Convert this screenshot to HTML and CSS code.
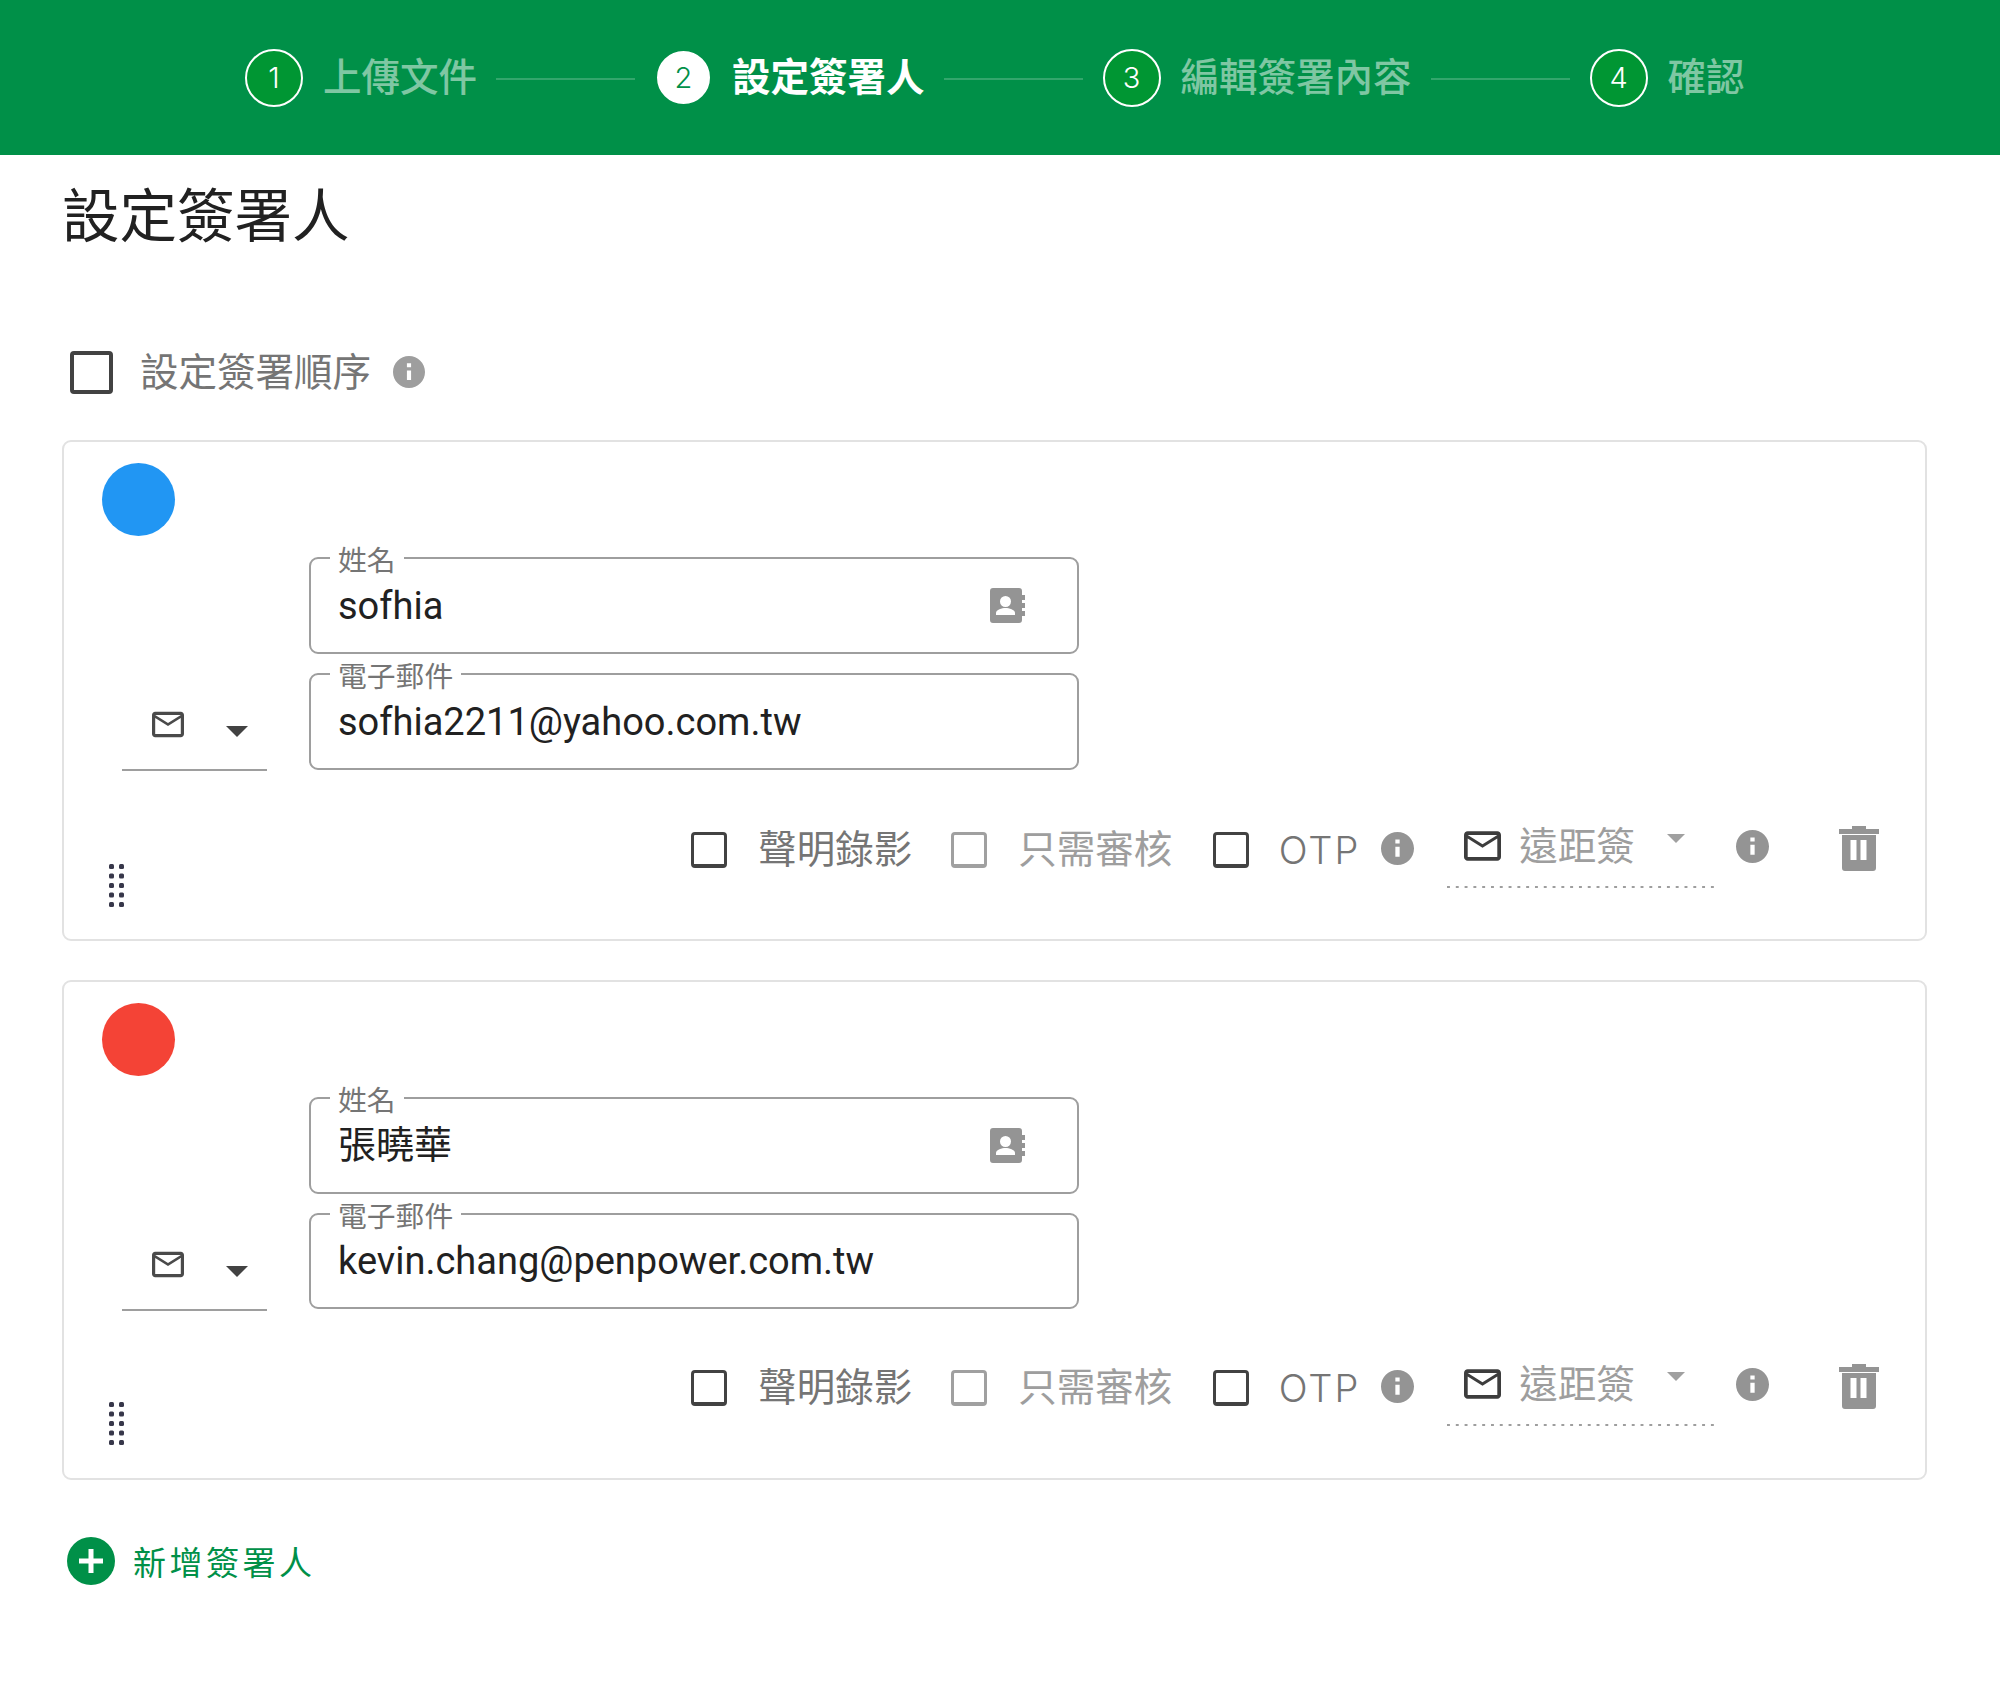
FILE: index.html
```html
<!DOCTYPE html>
<html lang="zh-Hant">
<head>
<meta charset="utf-8">
<title>設定簽署人</title>
<link rel="stylesheet" href="styles.css">
</head>
<body>
<header class="stepper">
  <span class="step-num">1</span><span class="step-text">上傳文件</span><span class="step-line"></span>
  <span class="step-num step-num-active">2</span><span class="step-text step-text-active">設定簽署人</span><span class="step-line"></span>
  <span class="step-num">3</span><span class="step-text">編輯簽署內容</span><span class="step-line"></span>
  <span class="step-num">4</span><span class="step-text">確認</span>
</header>
<main class="page">
  <h1 class="title">設定簽署人</h1>
  <div class="order-row">
    <span class="check check-large"></span>
    <span class="order-label">設定簽署順序</span>
    <svg class="icon-info icon-info-order" viewBox="2 2 20 20"><path d="M12 2C6.48 2 2 6.48 2 12s4.48 10 10 10 10-4.48 10-10S17.52 2 12 2zm1.3 15h-2.6v-6h2.6v6zm0-8h-2.6V6.6h2.6V9z"/></svg>
  </div>

  <section class="card">
    <div class="dot dot-blue"></div>
    <div class="identity">
      <div class="channel">
        <svg class="icon-mail" viewBox="2 4 20 16"><path d="M20 4H4c-1.100 0-1.990.9-1.990 2L2 18c0 1.100.9 2 2 2h16c1.100 0 2-.9 2-2V6c0-1.100-.9-2-2-2zm0 14H4V8l8 5 8-5v10zm-8-7L4 6h16l-8 5z"/></svg>
        <svg class="icon-caret" viewBox="0 0 24 12"><path d="M0 0h24L12 12z"/></svg>
      </div>
      <div class="fields">
        <div class="field">
          <span class="field-label">姓名</span>
          <span class="field-value">sofhia</span>
          <svg class="icon-book" viewBox="0 0 35 35"><path d="M3 0h26a3 3 0 0 1 3 3v4h3v5h-3v3h3v5h-3v3h3v5h-3v4a3 3 0 0 1-3 3H3a3 3 0 0 1-3-3V3a3 3 0 0 1 3-3z"/><circle class="book-cut" cx="15.500" cy="13.500" r="5.500"/><path class="book-cut" d="M6 27v-2c0-3.500 6-5 9.500-5s9.500 1.500 9.500 5v2z"/></svg>
        </div>
        <div class="field">
          <span class="field-label">電子郵件</span>
          <span class="field-value">sofhia2211@yahoo.com.tw</span>
        </div>
      </div>
    </div>
    <div class="options">
      <svg class="grip" viewBox="0 0 17 44"><g><rect x="1" y="1" width="5" height="5" rx="1.500"/><rect x="11" y="1" width="5" height="5" rx="1.500"/><rect x="1" y="10.500" width="5" height="5" rx="1.500"/><rect x="11" y="10.500" width="5" height="5" rx="1.500"/><rect x="1" y="20" width="5" height="5" rx="1.500"/><rect x="11" y="20" width="5" height="5" rx="1.500"/><rect x="1" y="29.500" width="5" height="5" rx="1.500"/><rect x="11" y="29.500" width="5" height="5" rx="1.500"/><rect x="1" y="39" width="5" height="5" rx="1.500"/><rect x="11" y="39" width="5" height="5" rx="1.500"/></g></svg>
      <div class="controls">
        <span class="check"></span><span class="opt-label">聲明錄影</span>
        <span class="check check-off"></span><span class="opt-label opt-label-off">只需審核</span>
        <span class="check"></span><span class="opt-label opt-otp">OTP</span>
        <svg class="icon-info icon-info-otp" viewBox="2 2 20 20"><path d="M12 2C6.48 2 2 6.48 2 12s4.48 10 10 10 10-4.48 10-10S17.52 2 12 2zm1.3 15h-2.600v-6h2.600v6zm0-8h-2.600V6.600h2.600V9z"/></svg>
        <div class="remote">
          <svg class="icon-mail icon-mail-large" viewBox="2 4 20 16"><path d="M20 4H4c-1.100 0-1.990.9-1.990 2L2 18c0 1.100.9 2 2 2h16c1.100 0 2-.9 2-2V6c0-1.100-.9-2-2-2zm0 14H4V8l8 5 8-5v10zm-8-7L4 6h16l-8 5z"/></svg>
          <span class="remote-label">遠距簽</span>
          <svg class="icon-caret-small" viewBox="0 0 24 12"><path d="M0 0h24L12 12z"/></svg>
        </div>
        <svg class="icon-info icon-info-remote" viewBox="2 2 20 20"><path d="M12 2C6.48 2 2 6.48 2 12s4.48 10 10 10 10-4.48 10-10S17.52 2 12 2zm1.3 15h-2.600v-6h2.600v6zm0-8h-2.600V6.600h2.600V9z"/></svg>
        <svg class="icon-trash" viewBox="0 0 40 45"><path d="M13 0h14v3h13v5H0V3h13z"/><path fill-rule="evenodd" d="M3 9h34v33a3 3 0 0 1-3 3H6a3 3 0 0 1-3-3zM11.500 14v20h6V14zM21.500 14v20h6V14z"/></svg>
      </div>
    </div>
  </section>

  <section class="card card-next">
    <div class="dot dot-red"></div>
    <div class="identity">
      <div class="channel">
        <svg class="icon-mail" viewBox="2 4 20 16"><path d="M20 4H4c-1.100 0-1.990.9-1.990 2L2 18c0 1.100.9 2 2 2h16c1.100 0 2-.9 2-2V6c0-1.100-.9-2-2-2zm0 14H4V8l8 5 8-5v10zm-8-7L4 6h16l-8 5z"/></svg>
        <svg class="icon-caret" viewBox="0 0 24 12"><path d="M0 0h24L12 12z"/></svg>
      </div>
      <div class="fields">
        <div class="field">
          <span class="field-label">姓名</span>
          <span class="field-value">張曉華</span>
          <svg class="icon-book" viewBox="0 0 35 35"><path d="M3 0h26a3 3 0 0 1 3 3v4h3v5h-3v3h3v5h-3v3h3v5h-3v4a3 3 0 0 1-3 3H3a3 3 0 0 1-3-3V3a3 3 0 0 1 3-3z"/><circle class="book-cut" cx="15.500" cy="13.500" r="5.500"/><path class="book-cut" d="M6 27v-2c0-3.500 6-5 9.500-5s9.500 1.500 9.500 5v2z"/></svg>
        </div>
        <div class="field">
          <span class="field-label">電子郵件</span>
          <span class="field-value">kevin.chang@penpower.com.tw</span>
        </div>
      </div>
    </div>
    <div class="options">
      <svg class="grip" viewBox="0 0 17 44"><g><rect x="1" y="1" width="5" height="5" rx="1.500"/><rect x="11" y="1" width="5" height="5" rx="1.500"/><rect x="1" y="10.500" width="5" height="5" rx="1.500"/><rect x="11" y="10.500" width="5" height="5" rx="1.500"/><rect x="1" y="20" width="5" height="5" rx="1.500"/><rect x="11" y="20" width="5" height="5" rx="1.500"/><rect x="1" y="29.500" width="5" height="5" rx="1.500"/><rect x="11" y="29.500" width="5" height="5" rx="1.500"/><rect x="1" y="39" width="5" height="5" rx="1.500"/><rect x="11" y="39" width="5" height="5" rx="1.500"/></g></svg>
      <div class="controls">
        <span class="check"></span><span class="opt-label">聲明錄影</span>
        <span class="check check-off"></span><span class="opt-label opt-label-off">只需審核</span>
        <span class="check"></span><span class="opt-label opt-otp">OTP</span>
        <svg class="icon-info icon-info-otp" viewBox="2 2 20 20"><path d="M12 2C6.48 2 2 6.48 2 12s4.48 10 10 10 10-4.48 10-10S17.52 2 12 2zm1.3 15h-2.600v-6h2.600v6zm0-8h-2.600V6.600h2.600V9z"/></svg>
        <div class="remote">
          <svg class="icon-mail icon-mail-large" viewBox="2 4 20 16"><path d="M20 4H4c-1.100 0-1.990.9-1.990 2L2 18c0 1.100.9 2 2 2h16c1.100 0 2-.9 2-2V6c0-1.100-.9-2-2-2zm0 14H4V8l8 5 8-5v10zm-8-7L4 6h16l-8 5z"/></svg>
          <span class="remote-label">遠距簽</span>
          <svg class="icon-caret-small" viewBox="0 0 24 12"><path d="M0 0h24L12 12z"/></svg>
        </div>
        <svg class="icon-info icon-info-remote" viewBox="2 2 20 20"><path d="M12 2C6.48 2 2 6.48 2 12s4.48 10 10 10 10-4.48 10-10S17.52 2 12 2zm1.3 15h-2.600v-6h2.600v6zm0-8h-2.600V6.600h2.600V9z"/></svg>
        <svg class="icon-trash" viewBox="0 0 40 45"><path d="M13 0h14v3h13v5H0V3h13z"/><path fill-rule="evenodd" d="M3 9h34v33a3 3 0 0 1-3 3H6a3 3 0 0 1-3-3zM11.500 14v20h6V14zM21.500 14v20h6V14z"/></svg>
      </div>
    </div>
  </section>

  <div class="add-row">
    <svg class="icon-add" viewBox="0 0 48 48"><circle cx="24" cy="24" r="24"/><path class="add-plus" d="M21.500 12h5v9.500H36v5h-9.500V36h-5v-9.500H12v-5h9.500z"/></svg>
    <span class="add-label">新增簽署人</span>
  </div>
</main>
</body>
</html>
```
FILE: styles.css
```css
* { box-sizing: border-box; }
html, body { margin: 0; background: #fff; }
body {
  font-family: Roboto, "Noto Sans CJK TC", sans-serif;
  color: #212121;
}

/* Stepper */
.stepper {
  height: 155px;
  background: #009048;
  display: flex;
  align-items: center;
  justify-content: center;
  padding-right: 10.5px;
}
.step-num {
  flex: none;
  width: 58px;
  height: 58px;
  margin-right: 20px;
  border: 2px solid #fff;
  border-radius: 50%;
  background: #009633;
  color: #fff;
  font-family: Inter, sans-serif;
  font-size: 29px;
  font-weight: 300;
  display: flex;
  align-items: center;
  justify-content: center;
}
.step-num-active {
  width: 53px;
  height: 53px;
  margin: 0 22px 0 2px;
  background: #fff;
  color: #009048;
}
.step-text {
  font-size: 38.5px;
  line-height: 58px;
  font-weight: 500;
  color: rgba(255, 255, 255, .5);
  white-space: nowrap;
}
.step-text-active { color: #fff; font-weight: 700; }
.step-line {
  flex: none;
  width: 139px;
  height: 2px;
  margin: 2px 20px 0 19px;
  background: rgba(255, 255, 255, .2);
}

/* Page */
.page { padding: 29px 73px 0 62px; }
.title {
  margin: 0 0 99px;
  font-size: 57.5px;
  line-height: 68px;
  font-weight: 400;
  color: #212121;
}
.order-row {
  display: flex;
  align-items: center;
  height: 43px;
  padding-left: 8px;
}
.order-label {
  margin-left: 27px;
  font-size: 38.5px;
  line-height: 43px;
  color: #757575;
}
.icon-info { flex: none; width: 32px; height: 32px; fill: #9e9e9e; margin-left: 22px; }
.icon-info-order { margin-top: -2px; }

/* Checkbox */
.check {
  flex: none;
  width: 36px;
  height: 36px;
  border: 3.5px solid #424242;
  border-bottom-width: 4px;
  border-radius: 4px;
  background: #fff;
}
.check-large { width: 43px; height: 43px; border-width: 4px; }
.check-off { border-color: #a0a0a0; }

/* Card */
.card {
  margin-top: 46px;
  border: 2px solid #e2e2e2;
  border-radius: 9px;
  padding-top: 21px;
}
.card-next { margin-top: 39px; }
.dot { width: 73px; height: 73px; margin-left: 38px; border-radius: 50%; }
.dot-blue { background: #2196f3; }
.dot-red { background: #f44336; }

.identity {
  display: flex;
  align-items: flex-end;
  margin: 21px 0 0 58px;
}
.channel {
  flex: none;
  display: flex;
  width: 145px;
  height: 62px;
  margin-right: 42px;
  padding: 2px 18px 0 30px;
  border-bottom: 2px solid #9e9e9e;
  justify-content: space-between;
}
.icon-mail { flex: none; width: 32px; height: 27px; fill: #4a4a4a; }
.icon-caret { flex: none; width: 24px; height: 11px; margin-top: 15px; fill: #424242; }

.fields { display: flex; flex-direction: column; gap: 19px; width: 770px; padding-bottom: 1px; }
.card-next .fields { padding-bottom: 2px; }
.field {
  position: relative;
  display: flex;
  align-items: center;
  justify-content: space-between;
  height: 97px;
  padding: 0 52px 0 27px;
  border: 2px solid #9e9e9e;
  border-radius: 9px;
}
.card-next .field { height: 96.5px; }
.field-label {
  position: absolute;
  top: -12px;
  left: 19px;
  padding: 0 8px;
  background: #fff;
  font-size: 28.8px;
  line-height: 28px;
  color: #757575;
}
.field-value { font-size: 38px; line-height: 46px; color: #212121; white-space: nowrap; }
.icon-book { flex: none; width: 35px; height: 35px; fill: #949494; }
.book-cut { fill: #fff; }

/* Option row */
.options {
  display: flex;
  justify-content: space-between;
  align-items: flex-start;
  margin-top: 55px;
  padding: 0 46px 32px 44px;
}
.card-next .options { margin-top: 53px; padding-bottom: 33px; }
.grip { flex: none; width: 17px; height: 44px; margin-top: 37px; fill: #37374a; }
.controls { display: flex; align-items: center; height: 62px; }
.controls > .check, .controls > .opt-label { margin-top: -14px; }
.opt-label { margin: 0 39px 0 31px; font-size: 38.5px; line-height: 46px; color: #757575; }
.opt-label-off { margin-right: 40.5px; color: #9e9e9e; }
.opt-otp {
  margin: -14px 0 0 30px;
  font-family: Inter, sans-serif;
  font-size: 38px;
  font-weight: 300;
  letter-spacing: 2px;
}
.icon-info-otp { margin: -18px 0 0 21px; width: 33px; height: 33px; fill: #949494; }
.remote {
  display: flex;
  flex: none;
  width: 268px;
  height: 62px;
  margin-left: 32.7px;
  padding: 5px 0 0 17.3px;
  align-items: flex-start;
  background: linear-gradient(90deg, #9e9e9e 3px, transparent 3px) left bottom / 8.8px 2px repeat-x;
}
.icon-mail-large { width: 37px; height: 30px; fill: #3d3d3d; }
.remote-label { margin: -7px 0 0 18px; font-size: 38.5px; line-height: 46px; color: #9e9e9e; }
.icon-caret-small { flex: none; width: 18px; height: 9px; margin: 3px 0 0 32px; fill: #a0a0a0; }
.icon-info-remote { margin: -22px 0 0 21px; width: 33px; height: 33px; fill: #949494; }
.icon-trash { flex: none; width: 40px; height: 45px; margin: -17px 0 0 70px; fill: #949494; }

/* Add */
.add-row { display: flex; align-items: center; margin: 57px 0 0 5px; height: 48px; }
.icon-add { flex: none; width: 48px; height: 48px; fill: #009048; }
.add-plus { fill: #fff; }
.add-label { margin-left: 18px; font-size: 33px; letter-spacing: 3.5px; color: #009048; }
```
